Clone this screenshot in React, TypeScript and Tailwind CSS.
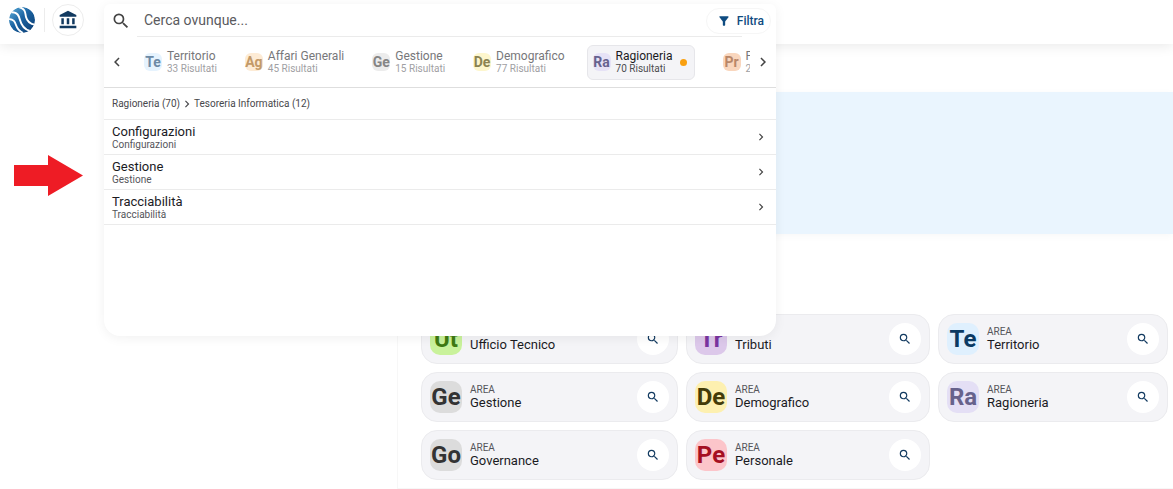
import { useState } from "react";
import { MdAccountBalance, MdChevronLeft, MdChevronRight, MdFilterAlt, MdSearch } from "react-icons/md";

const tabs = [
  { code: "Te", name: "Territorio", results: 33, color: "bg-[#e6f3fe] text-[#6d8aa5]" },
  { code: "Ag", name: "Affari Generali", results: 45, color: "bg-[#fdebd5] text-[#c39a68]" },
  { code: "Ge", name: "Gestione", results: 15, color: "bg-[#ececec] text-[#858585]" },
  { code: "De", name: "Demografico", results: 77, color: "bg-[#fdf6cd] text-[#8b8352]" },
  { code: "Ra", name: "Ragioneria", results: 70, color: "bg-[#e6e2f6] text-[#66628f]" },
  { code: "Pr", name: "Protocollo", results: 25, color: "bg-[#f9d6bd] text-[#b98768]" },
];

const items = ["Configurazioni", "Gestione", "Tracciabilità"];

const areas = [
  { code: "Ut", name: "Ufficio Tecnico", color: "bg-[#c9f29b] text-[#3f7a12]" },
  { code: "Tr", name: "Tributi", color: "bg-[#dcc8ea] text-[#7a34a0]" },
  { code: "Te", name: "Territorio", color: "bg-[#dff0fe] text-[#0b3a63]" },
  { code: "Ge", name: "Gestione", color: "bg-[#dcdcdc] text-[#333333]" },
  { code: "De", name: "Demografico", color: "bg-[#fdf0b0] text-[#443c08]" },
  { code: "Ra", name: "Ragioneria", color: "bg-[#e4dff5] text-[#67628c]" },
  { code: "Go", name: "Governance", color: "bg-[#dcdcdc] text-[#333333]" },
  { code: "Pe", name: "Personale", color: "bg-[#fcc5ca] text-[#a50f22]" },
];

function Logo() {
  return (
    <svg viewBox="0 0 26 26" className="size-[26px]" aria-hidden="true">
      <defs>
        <linearGradient id="globe" x1="0" y1="0" x2="1" y2="1">
          <stop offset="0" stopColor="#5fb0dc" />
          <stop offset="0.45" stopColor="#1c64a2" />
          <stop offset="1" stopColor="#0a3a70" />
        </linearGradient>
        <clipPath id="disc">
          <circle cx="13" cy="13" r="13" />
        </clipPath>
      </defs>
      <g clipPath="url(#disc)">
        <circle cx="13" cy="13" r="13" fill="url(#globe)" />
        <g fill="none" stroke="#fff" strokeWidth="1.9">
          <path d="M-1 12C5 12 6 15 7 18S10 24 14 26" />
          <path d="M1 5C9 5 10 9 11 13S14 22 21 24" />
          <path d="M10 0C17 2 16 6 17 10S20 17 27 18" />
        </g>
      </g>
    </svg>
  );
}

function App() {
  const [query, setQuery] = useState("");
  const [selected, setSelected] = useState("Ragioneria");

  return (
    <div className="relative min-h-screen overflow-hidden bg-white font-[Roboto,sans-serif] text-[#1b1b1f]">
      <header className="flex h-11 items-center pb-1 pl-[9px] shadow-[0_2px_12px_rgba(0,0,0,0.09)]">
        <Logo />
        <div className="ml-[9px] h-6 border-l border-[#ececec]"></div>
        <button
          aria-label="Ente"
          className="ml-[7px] flex size-8 items-center justify-center rounded-full border border-[#ededed] text-[#123a60]"
        >
          <MdAccountBalance size={20} />
        </button>
      </header>

      <div className="flex">
        <div className="w-[397px] shrink-0"></div>
        <main className="grow pt-12">
          <div className="h-[142px] bg-[#eaf5fe] shadow-[0_2px_8px_rgba(0,0,0,0.03)]"></div>
          <section className="mt-16 border-b border-l border-[#f7f7f7] pt-4 pr-[5px] pb-2 pl-[23px]">
            <div className="grid grid-cols-[257fr_244fr_230fr] gap-2">
              {areas.map((area) => (
                <div
                  key={area.name}
                  className="flex h-[50px] items-center rounded-2xl border border-[#ebebee] bg-[#f4f4f7] px-2"
                >
                  <div
                    className={`flex size-8 items-center justify-center rounded-[10px] text-2xl leading-none font-bold ${area.color}`}
                  >
                    {area.code}
                  </div>
                  <div className="ml-2 grow">
                    <div className="text-[10px] leading-3 text-[#55555a]">AREA</div>
                    <div className="text-[13px] leading-[14px]">{area.name}</div>
                  </div>
                  <button
                    aria-label={`Cerca in ${area.name}`}
                    className="flex size-8 items-center justify-center rounded-full bg-white text-[#123a60]"
                  >
                    <MdSearch size={14} />
                  </button>
                </div>
              ))}
            </div>
          </section>
        </main>
      </div>

      <div className="absolute top-1 left-[104px] h-[332px] w-[672px] rounded-t-md rounded-b-2xl bg-white shadow-[0_2px_12px_rgba(0,0,0,0.06)]">
        <div className="flex h-[33px] items-center pr-[5px] pl-[7px]">
          <label htmlFor="search" aria-label="Cerca">
            <MdSearch size={20} className="text-[#444]" />
          </label>
          <input
            id="search"
            type="text"
            value={query}
            onChange={(e) => setQuery(e.target.value)}
            placeholder="Cerca ovunque..."
            className="ml-[6px] -mr-9 h-[33px] grow border-b border-[#ebebeb] px-[7px] text-sm outline-none placeholder:text-[#5a5a5e]"
          />
          <button className="flex h-[26px] items-center gap-1.5 rounded-full border border-[#f6f6f6] bg-white pr-1.5 pl-2.5 text-xs font-medium text-[#0f4c81]">
            <MdFilterAlt size={14} />
            Filtra
          </button>
        </div>

        <div className="flex h-[51px] items-center border-b border-[#dedede] px-1">
          <button aria-label="Precedente" className="text-[#444]">
            <MdChevronLeft size={18} />
          </button>
          <div className="ml-3 flex w-0 grow gap-4 overflow-hidden">
            {tabs.map((tab) => {
              const active = tab.name === selected;
              return (
                <button
                  key={tab.name}
                  onClick={() => setSelected(tab.name)}
                  className={`flex h-[35px] shrink-0 items-center gap-[5px] rounded-md border px-[5px] text-left ${
                    active ? "mr-1.5 border-[#e6e6ea] bg-[#f4f4f7]" : "border-transparent"
                  }`}
                >
                  <span
                    className={`flex size-[18px] items-center justify-center rounded-md text-sm leading-none font-bold ${tab.color}`}
                  >
                    {tab.code}
                  </span>
                  <span>
                    <span className={`block text-xs leading-[13px] ${active ? "text-[#1b1b1f]" : "text-[#77777a]"}`}>
                      {tab.name}
                    </span>
                    <span className={`block text-[10px] leading-3 ${active ? "text-[#4c4c50]" : "text-[#a0a0a3]"}`}>
                      {tab.results} Risultati
                    </span>
                  </span>
                  {active && <span className="mx-0.5 size-[7px] rounded-full bg-[#f9a010]"></span>}
                </button>
              );
            })}
          </div>
          <button aria-label="Successivo" className="ml-1 text-[#444]">
            <MdChevronRight size={18} />
          </button>
        </div>

        <nav className="flex h-8 items-center border-b border-[#ebebeb] px-2 text-[10px] text-[#48484c]">
          <a href="#ragioneria">Ragioneria (70)</a>
          <MdChevronRight size={14} />
          <a href="#tesoreria">Tesoreria Informatica (12)</a>
        </nav>

        {items.map((item) => (
          <button
            key={item}
            className="flex h-[35px] w-full items-center justify-between border-b border-[#ebebeb] px-2 text-left"
          >
            <span className="pt-px">
              <span className="block text-[13px] leading-[14px]">{item}</span>
              <span className="block text-[10px] leading-3 text-[#55555a]">{item}</span>
            </span>
            <MdChevronRight size={14} className="text-[#444]" />
          </button>
        ))}
      </div>

      <svg viewBox="0 0 69 41" className="absolute top-[155px] left-[14px] w-[69px]" aria-hidden="true">
        <path d="M0 10H34V0L69 20.5L34 41V31H0Z" fill="#ee1c25" />
      </svg>
    </div>
  );
}

export default App;
